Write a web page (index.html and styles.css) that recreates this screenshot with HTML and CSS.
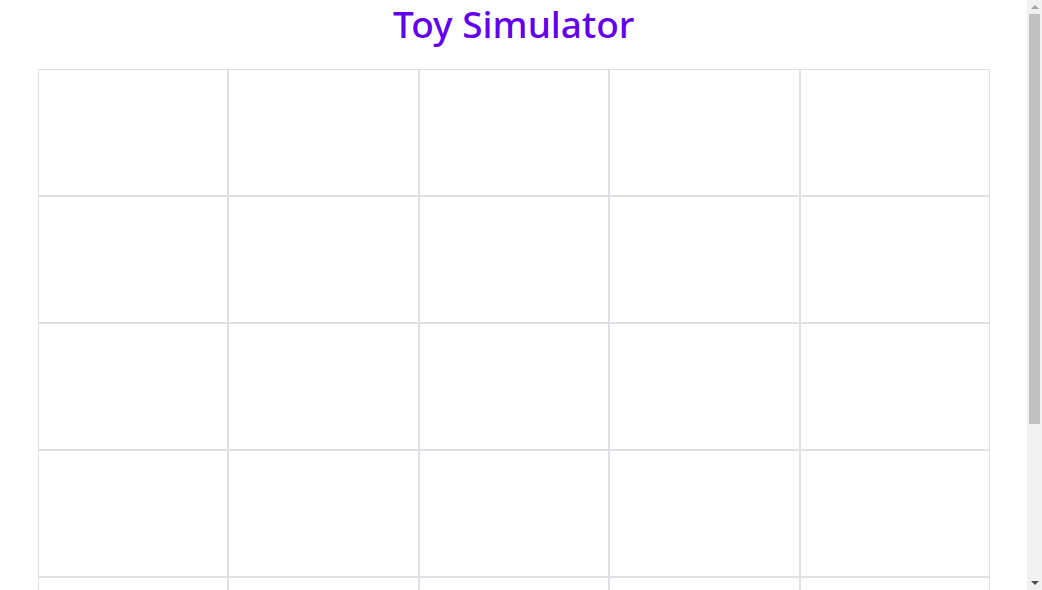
FILE: index.html
```html
<!DOCTYPE html>
<html lang="en">
<head>
<meta charset="utf-8">
<title>Toy Simulator</title>
<link rel="stylesheet" href="styles.css">
</head>
<body>
<main class="app">
  <h1 class="title">Toy Simulator</h1>
  <div class="board">
    <div class="cell"></div><div class="cell"></div><div class="cell"></div><div class="cell"></div><div class="cell"></div>
    <div class="cell"></div><div class="cell"></div><div class="cell"></div><div class="cell"></div><div class="cell"></div>
    <div class="cell"></div><div class="cell"></div><div class="cell"></div><div class="cell"></div><div class="cell"></div>
    <div class="cell"></div><div class="cell"></div><div class="cell"></div><div class="cell"></div><div class="cell"></div>
    <div class="cell"></div><div class="cell"></div><div class="cell"></div><div class="cell"></div><div class="cell"></div>
  </div>
</main>
<div class="scrollbar" aria-hidden="true">
  <div class="arrow arrow-up"></div>
  <div class="thumb"></div>
  <div class="arrow arrow-down"></div>
</div>
</body>
</html>
```
FILE: styles.css
```css
html, body {
  margin: 0;
  padding: 0;
  background: #ffffff;
}
.app {
  margin-right: 15px;
  padding: 0 37px 102px 37.5px;
  display: flex;
  flex-direction: column;
  font-family: "Noto Sans", "Open Sans", sans-serif;
}
.title {
  margin: 0 0 22px;
  padding-top: 1px;
  text-align: center;
  font-size: 37px;
  font-weight: 500;
  line-height: 46px;
  color: #6200ee;
}
.board {
  display: grid;
  grid-template-columns: repeat(5, 1fr);
  grid-auto-rows: 127px;
}
.cell {
  border: 1px solid #dfe0e5;
}
.scrollbar {
  position: fixed;
  top: 0;
  right: 0;
  width: 15px;
  height: 100%;
  background: #f1f1f1;
  display: flex;
  flex-direction: column;
  align-items: center;
}
.arrow {
  width: 0;
  height: 0;
  border-left: 4px solid transparent;
  border-right: 4px solid transparent;
}
.arrow-up {
  margin-top: 5px;
  border-bottom: 4px solid #a3a3a3;
}
.thumb {
  margin-top: 5px;
  width: 11px;
  height: 410px;
  background: #c1c1c1;
}
.arrow-down {
  margin-top: auto;
  margin-bottom: 5px;
  border-top: 4px solid #505050;
}
```
